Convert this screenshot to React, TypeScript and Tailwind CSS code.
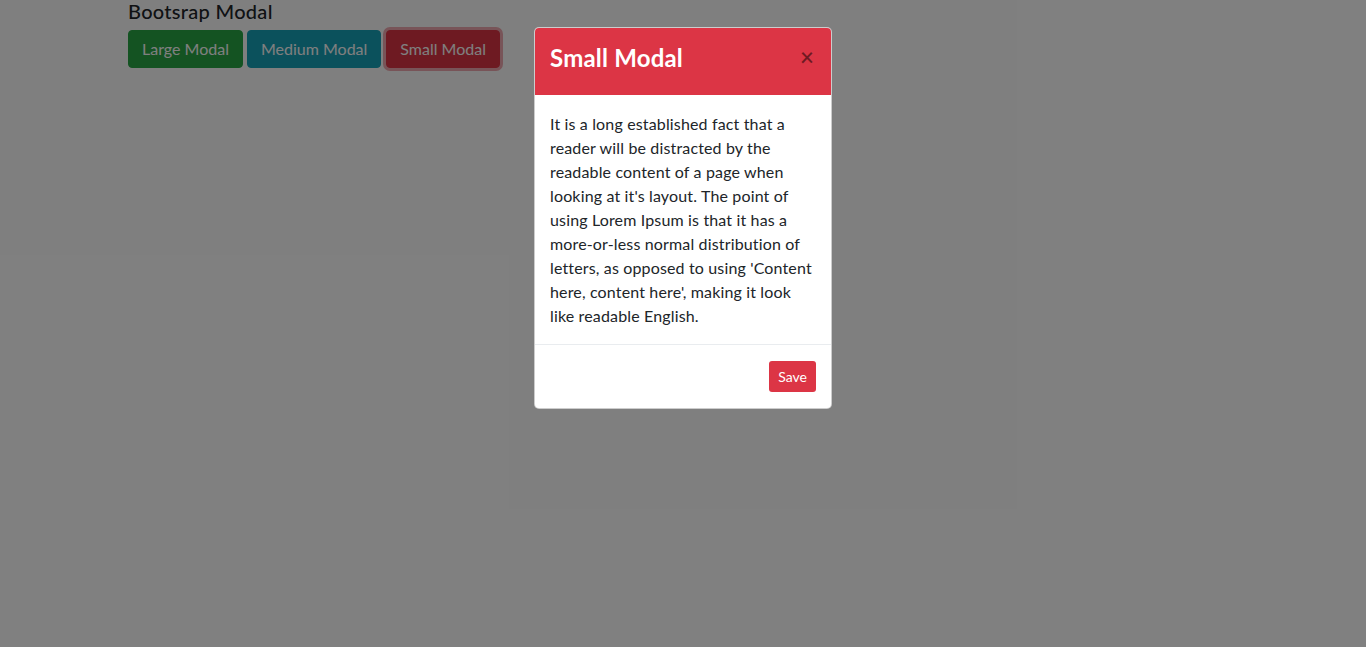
import { useState } from 'react';

const bodyText =
    "It is a long established fact that a reader will be distracted by the readable content of a page when looking at it's layout. The point of using Lorem Ipsum is that it has a more-or-less normal distribution of letters, as opposed to using 'Content here, content here', making it look like readable English.";

export default function App() {
    const [open, setOpen] = useState(true);

    return (
        <div className="relative min-h-[647px] bg-white font-['Lato','Noto_Sans',sans-serif] text-[#212529]">
            {/* Page content */}
            <div className="mx-auto w-[1140px] px-[15px]">
                <h5 className="mb-[6px] text-[20px] leading-[20px] pt-[1px] pb-[3px] font-medium tracking-[0.3px]">Bootsrap Modal</h5>
                <div className="flex gap-[4px]">
                    <button className="h-[38px] rounded-[4px] border border-[#28a745] bg-[#28a745] px-[13px] text-[16px] text-white">
                        Large Modal
                    </button>
                    <button className="h-[38px] rounded-[4px] border border-[#17a2b8] bg-[#17a2b8] px-[13px] text-[16px] text-white">
                        Medium Modal
                    </button>
                    <button
                        onClick={() => setOpen(true)}
                        className="ml-[1px] h-[38px] rounded-[4px] border border-[#dc3545] bg-[#dc3545] px-[13px] text-[16px] text-white shadow-[0_0_0_3px_rgba(225,83,97,0.5)]"
                    >
                        Small Modal
                    </button>
                </div>
            </div>

            {/* Backdrop + Modal */}
            {open && (
                <div className="absolute inset-0 bg-black/50">
                    <div className="mx-auto mt-[27px] w-[298px] overflow-hidden rounded-[5px] border border-black/20 bg-white">
                        {/* Header */}
                        <div className="flex h-[67px] items-start bg-[#dc3545] px-[15px] pt-[12px]">
                            <h4 className="text-[24px] leading-[36px] font-bold text-white tracking-[0.2px]">Small Modal</h4>
                            <button
                                onClick={() => setOpen(false)}
                                className="ml-auto mr-[2px] mt-[-1px] text-[24px] leading-[36px] font-semibold text-black/50"
                            >
                                ×
                            </button>
                        </div>

                        {/* Body */}
                        <div className="px-[15px] pt-[17px] pb-[16px] text-[16px] leading-[24px] tracking-[0.15px]">
                            <p>{bodyText}</p>
                        </div>

                        {/* Footer */}
                        <div className="flex justify-end border-t border-[#e9ecef] px-[15px] pt-[16px] pb-[16px]">
                            <button className="h-[31px] rounded-[3px] bg-[#dc3545] px-[9px] text-[14px] text-white">
                                Save
                            </button>
                        </div>
                    </div>
                </div>
            )}
        </div>
    );
}
